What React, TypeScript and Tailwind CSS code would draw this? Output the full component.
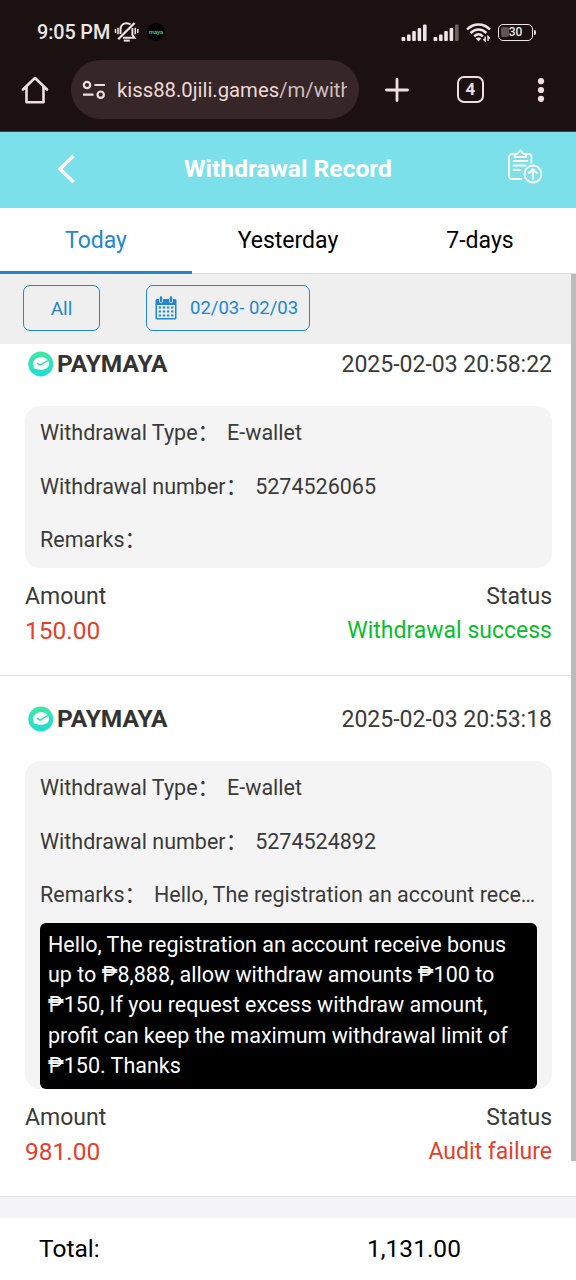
type WithdrawalRecord = {
  time: string;
  number: string;
  remarks?: string;
  amount: string;
  status: string;
  statusColor: string;
};

const tabs = ["Today", "Yesterday", "7-days"];

const records: WithdrawalRecord[] = [
  {
    time: "2025-02-03 20:58:22",
    number: "5274526065",
    amount: "150.00",
    status: "Withdrawal success",
    statusColor: "text-[#09be2e]",
  },
  {
    time: "2025-02-03 20:53:18",
    number: "5274524892",
    remarks:
      "Hello, The registration an account receive bonus up to ₱8,888, allow withdraw amounts ₱100 to ₱150, If you request excess withdraw amount, profit can keep the maximum withdrawal limit of ₱150. Thanks",
    amount: "981.00",
    status: "Audit failure",
    statusColor: "text-[#e5402a]",
  },
];

function MutedBellIcon() {
  return (
    <svg width="26" height="22" viewBox="0 0 26 22" fill="none" stroke="#ece6e6" strokeWidth="2">
      <path d="M6.5 13V8.5C6.5 4.5 9 2.2 12.5 2.2c1.6 0 3 .5 4 1.4M18.4 7v7l2 2.7H9" />
      <path d="M4.2 18.2 20.6 2" strokeWidth="2.3" />
      <path d="M9.7 19.6h6" strokeWidth="2" />
      <path d="M1.5 8v4M4 6.8v6.4M21.3 6.8v6.4M23.8 8v4" strokeWidth="1.5" />
    </svg>
  );
}

function SignalIcon({ weak = false }: { weak?: boolean }) {
  return (
    <svg width="26" height="17" viewBox="0 0 26 17" fill="#ece6e6">
      <rect x="0.5" y="13" width="3.8" height="4" rx="1" />
      <rect x="6" y="10.5" width="3.6" height="6.5" rx="1" />
      <rect x="11.2" y="7" width="3.6" height="10" rx="1" />
      <rect x="16.6" y="4" width="3.6" height="13" rx="1" />
      <rect x="22" y="0.5" width="3.6" height="16.5" rx="1" fill={weak ? "#6b6462" : "#ece6e6"} />
    </svg>
  );
}

function WifiIcon() {
  return (
    <svg width="25" height="19" viewBox="0 0 25 19" fill="none" stroke="#ece6e6" strokeWidth="2.5">
      <path d="M1 6.5C7.5-.3 17.5-.3 24 6.5" />
      <path d="M4.6 10C9.3 5.3 15.7 5.3 20.4 10" />
      <path d="M8.2 13.3c2.7-2.5 5.9-2.5 8.6 0" />
      <path d="m9.7 15.5 2.8 3 2.8-3c-1.5-1.2-4.1-1.2-5.6 0Z" fill="#ece6e6" stroke="none" />
      <path d="M19.2 13.5V18l-1.8-2M22 18v-4.5l1.8 2" strokeWidth="1.4" />
    </svg>
  );
}

function StatusBar() {
  return (
    <div className="flex h-[62px] items-center pl-[37px] pr-[40px] pt-[2px]">
      <span className="w-[77px] whitespace-nowrap pt-px text-[19.8px] font-medium tracking-[-0.1px] text-[#ece6e6]">
        9:05 PM
      </span>
      <MutedBellIcon />
      <div className="ml-[7px] flex size-[18px] items-center justify-center rounded-full bg-black">
        <span className="text-[6px] font-bold leading-none text-[#3fbf8b]">maya</span>
      </div>
      <div className="ml-auto flex items-center">
        <SignalIcon />
        <span className="w-[6px]" />
        <SignalIcon weak />
        <span className="w-[7px]" />
        <WifiIcon />
        <div className="relative ml-[7px] h-[17px] w-[35px] rounded-[5px] border-[1.5px] border-[#ece6e6]">
          <span className="absolute left-[2px] top-[2px] h-[10px] w-[8px] rounded-[2px] bg-[#5d5654]" />
          <span className="relative block text-center text-[12px] font-medium leading-[15px] text-[#ece6e6]">30</span>
        </div>
        <span className="ml-px h-[5px] w-[2px] rounded-r bg-[#ece6e6]" />
      </div>
    </div>
  );
}

function BrowserBar() {
  return (
    <div className="flex h-[69px] items-center pb-[14px] pl-[21px]">
      <svg width="28" height="28" viewBox="0 0 28 28" fill="none" stroke="#f0dfdf" strokeWidth="2.6" strokeLinejoin="round" strokeLinecap="round">
        <path d="M2 13.5 14 2l12 11.5M5.5 11v15.2h17V11" />
      </svg>
      <div className="ml-[22px] flex h-[59px] w-[288px] items-center rounded-full bg-[#362627] pl-[11px]">
        <svg width="24" height="20" viewBox="0 0 24 20" fill="none" stroke="#f0dfdf" strokeWidth="2.2">
          <circle cx="5" cy="5" r="3.2" />
          <path d="M12.5 5H23M1 14.7h10.5" />
          <circle cx="18.7" cy="14.7" r="3.2" />
        </svg>
        <div className="ml-[11px] w-[230px] overflow-hidden whitespace-nowrap pt-px text-[20.3px] leading-[30px] text-[#ecd9da]">
          kiss88.0jili.games<span className="text-[#d0bfc0]">/m/with</span>
        </div>
      </div>
      <svg className="ml-[26px]" width="24" height="24" viewBox="0 0 24 24" stroke="#f0dfdf" strokeWidth="2.8" strokeLinecap="round">
        <path d="M12 1.5v21M1.5 12h21" />
      </svg>
      <div className="ml-[48px] flex size-[27px] items-center justify-center rounded-[7px] border-[2.5px] border-[#f0dfdf] text-[17px] font-bold leading-none text-[#f0dfdf]">
        4
      </div>
      <svg className="ml-[53px]" width="8" height="24" viewBox="0 0 8 24" fill="#f0dfdf">
        <circle cx="4" cy="3.2" r="3.1" />
        <circle cx="4" cy="12" r="3.1" />
        <circle cx="4" cy="20.8" r="3.1" />
      </svg>
    </div>
  );
}

function PageHeader() {
  return (
    <header className="flex h-[76px] items-center bg-[#7be0ea] pb-[3px] pl-[57px] pr-[33px]">
      <svg width="19" height="30" viewBox="0 0 19 30" fill="none" stroke="#fff" strokeWidth="3.4">
        <path d="M16.5 2 3 15l13.5 13" />
      </svg>
      <h1 className="flex-1 whitespace-nowrap pr-[7px] text-center text-[24.6px] font-bold leading-[30px] text-white">
        Withdrawal Record
      </h1>
      <svg className="-mt-[5px]" width="36" height="36" viewBox="0 0 36 36" fill="none" stroke="#fff" strokeWidth="1.8" strokeLinecap="round" strokeLinejoin="round">
        <path d="M7 6H5a3 3 0 0 0-3 3v19a3 3 0 0 0 3 3h9.5M19.5 6h2a3 3 0 0 1 3 3v6" />
        <path d="M7.5 9c0-2.6 1.100-3.400 3.100-3.700L13.300 2.300 16 5.300c2 .3 3.300 1.100 3.300 3.700Z" />
        <path d="M6.5 13h14M6.5 17.5h12M6.5 22h7" />
        <circle cx="26" cy="26" r="8.5" />
        <path d="M26 31v-9.5M22.200 25l3.800-3.800 3.800 3.800" strokeWidth="2.200" />
      </svg>
    </header>
  );
}

function CalendarIcon() {
  return (
    <svg width="22" height="24" viewBox="0 0 22 24">
      <path d="M2 3h18a1.5 1.5 0 0 1 1.5 1.5V22a1.5 1.5 0 0 1-1.5 1.5H2A1.5 1.5 0 0 1 .5 22V4.5A1.5 1.5 0 0 1 2 3Z" fill="#2187d0" />
      <path d="M2 9h18v13H2Z" fill="#efefef" />
      <path d="M4 .5h4V5a2 2 0 0 1-4 0ZM14 .5h4V5a2 2 0 0 1-4 0Z" fill="#efefef" />
      <path d="M6 1.500V5M16 1.500V5" stroke="#2187d0" strokeWidth="2.4" strokeLinecap="round" />
      <path d="M3.7 11.500h15M3.7 15.500h15M3.7 19.500h15" stroke="#2187d0" strokeWidth="2.2" strokeDasharray="2.4 1.7" />
    </svg>
  );
}

function MayaLogo() {
  return (
    <svg width="26" height="26" viewBox="0 0 26 26">
      <defs>
        <linearGradient id="maya" x1="0" y1="0" x2="0" y2="1">
          <stop offset="0" stopColor="#40e8a4" />
          <stop offset="1" stopColor="#1fdcd3" />
        </linearGradient>
      </defs>
      <circle cx="12.800" cy="13" r="12.500" fill="url(#maya)" />
      <path d="M7.500 8c3-2.300 8.500-2.300 11.500.2 3 3 2.600 7-.4 9-3.300 2-7.600 2-10 .8-2.300.2-3.300-1-3-3.200-1-2.600-.5-5.100 1.900-6.800Z" fill="#fff" />
      <path d="m9 12.200 3.100 1.900 8-4.700" fill="none" stroke="#2de0b8" strokeWidth="1.400" />
    </svg>
  );
}

function Field({ label, value }: { label: string; value?: string }) {
  return (
    <div className="flex h-[53.6px] items-center whitespace-nowrap">
      <span className="shrink-0">{label}：</span>
      <span className="ml-[8px] min-w-0 truncate">{value}</span>
    </div>
  );
}

function RecordItem({ record }: { record: WithdrawalRecord }) {
  return (
    <article className="border-b border-[#e2e2e2] pb-[27px] pl-[25px] pr-[24px] pt-[23px] text-[#3a3a3a]">
      <div className="flex h-10 items-center">
        <span className="ml-[3px]">
          <MayaLogo />
        </span>
        <span className="ml-[3px] text-[24.5px] font-bold text-[#333]">PAYMAYA</span>
        <time className="ml-auto pt-[2px] text-[23px]">{record.time}</time>
      </div>

      <div className="mt-[22px] rounded-[15px] bg-[#f4f4f4] px-[15px] text-[21.5px] leading-[30px]">
        <div className="h-[162px] pt-[0.5px]">
          <Field label="Withdrawal Type" value="E-wallet" />
          <Field label="Withdrawal number" value={record.number} />
          <Field label="Remarks" value={record.remarks} />
        </div>
        {record.remarks && (
          <p className="h-[166px] w-[497px] rounded-[6px] bg-black px-[8px] pt-[7px] leading-[30.2px] text-white">
            {record.remarks}
          </p>
        )}
      </div>

      <div className="mt-[12px] flex justify-between text-[23px] leading-[34px]">
        <div>
          <div>Amount</div>
          <div className="text-[24.5px] text-[#e5402a]">{record.amount}</div>
        </div>
        <div className="text-right">
          <div>Status</div>
          <div className={record.statusColor}>{record.status}</div>
        </div>
      </div>
    </article>
  );
}

export default function App() {
  return (
    <div className="relative flex h-[1280px] w-[576px] flex-col overflow-hidden bg-white font-['Roboto','Noto_Sans_CJK_SC',sans-serif]">
      <div className="h-[132px] shrink-0 border-b border-[#4a3c3e] bg-[#1b1110]">
        <StatusBar />
        <BrowserBar />
      </div>
      <PageHeader />

      {/* Day tabs */}
      <nav className="flex h-[66px] shrink-0 text-[23px]">
        {tabs.map((tab, i) => (
          <button
            key={tab}
            className={
              i === 0
                ? "flex-1 border-b-[3px] border-[#2187d0] pt-[4px] text-[#2187d0]"
                : "flex-1 border-b border-[#dedede] pt-[2px] text-black"
            }
          >
            {tab}
          </button>
        ))}
      </nav>

      {/* Filters */}
      <div className="flex h-[70px] shrink-0 items-center bg-[#efefef] pb-[2px] pl-[23px] text-[19px] text-[#2187d0]">
        <button className="h-[46px] w-[77px] rounded-[7px] border border-[#2187d0] pt-[2px]">All</button>
        <button className="ml-[46px] flex h-[46px] w-[164px] items-center rounded-[7px] border border-[#2187d0] pl-[8px] text-[18.5px]">
          <CalendarIcon />
          <span className="ml-[13px] whitespace-nowrap pt-px">02/03- 02/03</span>
        </button>
      </div>

      {/* Record list, scrolled down a little */}
      <main className="h-[853px] shrink-0 overflow-hidden">
        <div className="-mt-[23px]">
          {records.map((record) => (
            <RecordItem key={record.number} record={record} />
          ))}
        </div>
      </main>

      <div className="h-[21px] shrink-0 bg-[#f3f3f9]" />
      <footer className="flex flex-1 items-center pl-[39px] text-[24.5px] text-black">
        <span className="w-[328px]">Total:</span>
        <span>1,131.00</span>
      </footer>

      {/* Scrollbar thumb */}
      <div className="absolute right-0 top-[274px] h-[887px] w-[5px] bg-[#bbb]" />
    </div>
  );
}
